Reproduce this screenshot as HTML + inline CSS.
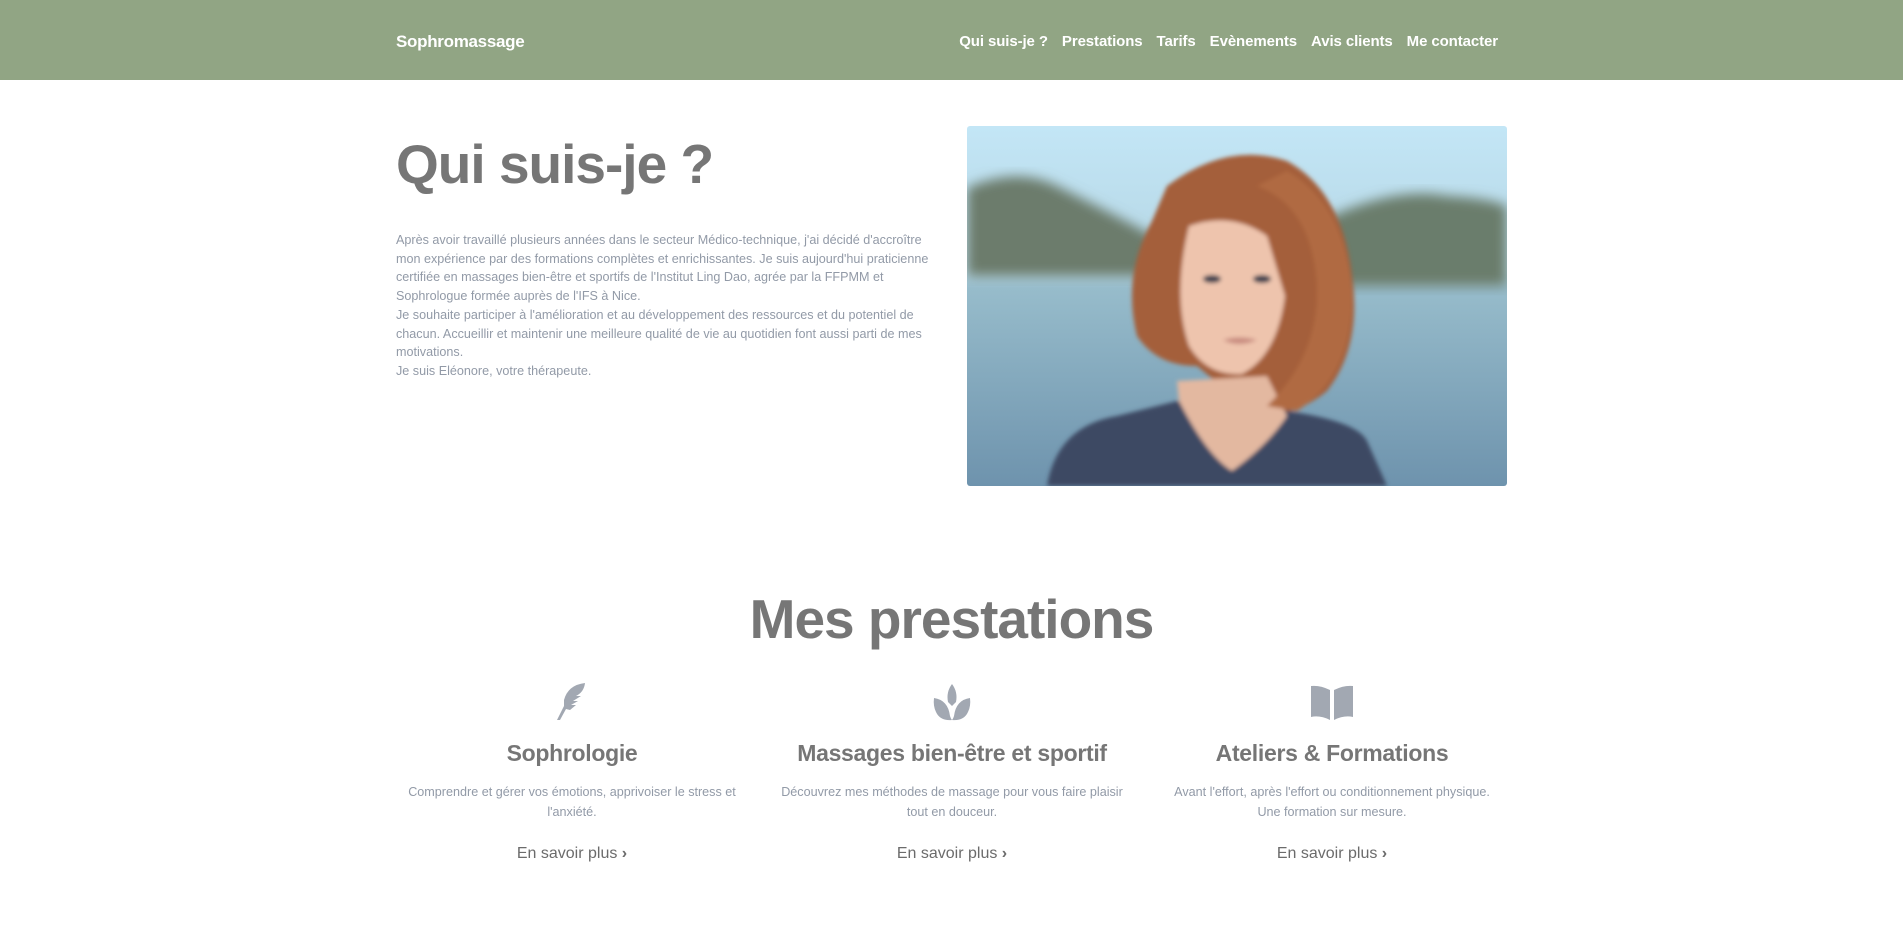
<!DOCTYPE html>
<html><head><meta charset="utf-8">
<style>
*{margin:0;padding:0;box-sizing:border-box}
body{width:1903px;height:947px;overflow:hidden;background:#fff;font-family:"Liberation Sans",sans-serif}
nav{height:80px;background:#91a584;position:relative}
.brand{position:absolute;left:396px;top:32px;color:#fff;font-weight:bold;font-size:17px;letter-spacing:-0.3px}
.links{position:absolute;right:405px;top:33px;color:#fff;font-weight:bold;font-size:15px;white-space:nowrap;letter-spacing:-0.1px}
.links span{margin-left:14px}
h1{position:absolute;left:396px;top:132px;font-size:55px;color:#767676;font-weight:bold;letter-spacing:-1px}
.para{position:absolute;left:396px;top:231px;font-size:12.6px;line-height:18.7px;color:#929aa7;white-space:nowrap}
.img{position:absolute;left:967px;top:126px;width:540px;height:360px;border-radius:3px;overflow:hidden}
h2{position:absolute;left:0;width:1903px;text-align:center;top:587px;font-size:55px;color:#767676;font-weight:bold;letter-spacing:-1px}
.col{position:absolute;top:682px;width:380px;text-align:center}
.col svg{display:block;margin:0 auto;height:40px}
.col h3{font-size:23px;color:#767676;font-weight:bold;position:absolute;width:100%;top:58px;letter-spacing:-0.3px}
.col p{position:absolute;top:101px;width:100%;font-size:12.6px;line-height:19.5px;color:#929aa7;padding:0 10px}
.col a{position:absolute;top:163px;width:100%;left:0;font-size:16px;color:#6b6b6b}
</style></head><body>
<nav><div class="brand">Sophromassage</div>
<div class="links"><span>Qui suis-je ?</span><span>Prestations</span><span>Tarifs</span><span>Evènements</span><span>Avis clients</span><span>Me contacter</span></div></nav>
<h1>Qui suis-je ?</h1>
<div class="para">Après avoir travaillé plusieurs années dans le secteur Médico-technique, j'ai décidé d'accroître<br>mon expérience par des formations complètes et enrichissantes. Je suis aujourd'hui praticienne<br>certifiée en massages bien-être et sportifs de l'Institut Ling Dao, agrée par la FFPMM et<br>Sophrologue formée auprès de l'IFS à Nice.<br>Je souhaite participer à l'amélioration et au développement des ressources et du potentiel de<br>chacun. Accueillir et maintenir une meilleure qualité de vie au quotidien font aussi parti de mes<br>motivations.<br>Je suis Eléonore, votre thérapeute.</div>
<div class="img"><svg width="540" height="360" viewBox="0 0 540 360">
<defs><linearGradient id="bg" x1="0" y1="0" x2="0" y2="1"><stop offset="0" stop-color="#c3e6f6"/><stop offset=".4" stop-color="#b5d6e4"/><stop offset=".45" stop-color="#97bccb"/><stop offset="1" stop-color="#6e93ad"/></linearGradient>
<filter id="b"><feGaussianBlur stdDeviation="6"/></filter><filter id="b2"><feGaussianBlur stdDeviation="2"/></filter></defs>
<rect width="540" height="360" fill="url(#bg)"/>
<path d="M0 62 Q50 40 90 60 Q150 90 190 112 L190 150 L0 150Z" fill="#6c7c6c" filter="url(#b)"/>
<path d="M360 92 Q430 60 480 70 Q520 72 540 80 L540 160 L360 160Z" fill="#6b7d6c" filter="url(#b)"/>
<g filter="url(#b2)">
<path d="M200 60 Q260 15 320 35 Q375 65 385 150 Q395 220 360 265 Q330 290 290 290 L230 240 Q190 240 170 210 Q155 150 185 95Z" fill="#a45f3a"/>
<path d="M80 360 Q90 300 150 290 L210 275 L320 285 Q390 295 400 315 L420 360Z" fill="#3e4863"/>
<path d="M210 255 L212 275 Q240 330 265 345 Q300 320 320 290 L300 250Z" fill="#e3b8a0"/>
<path d="M222 100 Q265 85 300 110 L318 170 Q310 230 275 248 Q240 250 222 220 Q205 170 222 100Z" fill="#eec4ad"/>
<path d="M290 60 Q345 80 350 160 Q352 230 300 280 L330 285 Q385 250 385 170 Q380 80 320 45Z" fill="#b06b42"/>
<ellipse cx="245" cy="153" rx="9" ry="4" fill="#3c4050"/><ellipse cx="295" cy="153" rx="9" ry="4" fill="#3c4050"/>
<path d="M256 214 Q272 209 290 214 Q272 222 256 214Z" fill="#c98c80"/>
</g></svg></div>
<h2>Mes prestations</h2>
<div class="col" style="left:382px"><svg viewBox="0 0 40 40" width="40"><path d="M33 1 Q16 3 12 18 L12 24 L7 34 L5 38 L8 38 L14 27 L18 28 L24 23 L19 23 L26 19 L21 19 L29 14 L24 14 Q32 10 33 1Z" fill="#a2a8b2"/></svg>
<h3>Sophrologie</h3><p>Comprendre et gérer vos émotions, apprivoiser le stress et<br>l'anxiété.</p><a>En savoir plus <b>›</b></a></div>
<div class="col" style="left:762px"><svg viewBox="0 0 44 40" width="44"><path d="M22 2 Q28 10 26 20 L22 24 L18 20 Q16 10 22 2Z M4 16 Q18 18 20 34 Q21 37 22 38 Q10 39 6 30 Q3 24 4 16Z M40 16 Q26 18 24 34 Q23 37 22 38 Q34 39 38 30 Q41 24 40 16Z" fill="#a2a8b2"/></svg>
<h3>Massages bien-être et sportif</h3><p>Découvrez mes méthodes de massage pour vous faire plaisir<br>tout en douceur.</p><a>En savoir plus <b>›</b></a></div>
<div class="col" style="left:1142px"><svg viewBox="0 0 44 40" width="44"><path d="M1 4 Q10 3 20 8 L20 38 Q10 33 1 35Z M43 4 Q34 3 24 8 L24 38 Q34 33 43 35Z" fill="#a2a8b2"/></svg>
<h3>Ateliers &amp; Formations</h3><p>Avant l'effort, après l'effort ou conditionnement physique.<br>Une formation sur mesure.</p><a>En savoir plus <b>›</b></a></div>
</body></html>
